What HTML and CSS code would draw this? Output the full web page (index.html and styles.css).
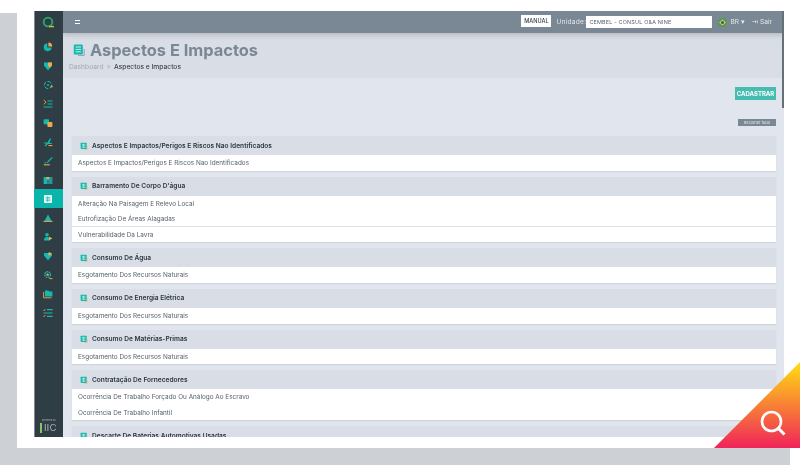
FILE: index.html
```html
<!DOCTYPE html>
<html lang="pt-BR">
<head>
<meta charset="utf-8">
<title>Aspectos E Impactos</title>
<link rel="stylesheet" href="styles.css">
</head>
<body>
<svg class="sprite" width="0" height="0" aria-hidden="true">
  <symbol id="tbl" viewBox="0 0 12 12">
    <rect x="1" y="1" width="9" height="9.5" rx="1" fill="#14b8ad"/>
    <path d="M3 3.6h5M3 5.8h5M3 8h5M5.5 2.5v6.5" stroke="#e4f6f4" stroke-width=".8" fill="none"/>
    <path d="M10.6 6v5H7" stroke="#eea94f" stroke-width="1" fill="none"/>
  </symbol>
</svg>
<div class="backdrop">
  <div class="panel">
    <div class="frame">
      <aside class="sidebar">
        <div class="logo">
          <svg width="14" height="13" viewBox="0 0 14 13"><circle cx="7" cy="6" r="4.3" fill="none" stroke="#29a96b" stroke-width="1.8"/><path d="M8 10.6h5" stroke="#cbb84a" stroke-width="1.4"/></svg>
        </div>
        <nav class="menu">
          <a class="item"><svg class="ic" viewBox="0 0 10 10"><path d="M4.3 1.2a4 4 0 1 0 4.4 4.4H4.3z" fill="#14b8ad"/><path d="M5.4 .5v3.9h3.9A4 4 0 0 0 5.4 .5z" fill="#eea94f"/></svg></a>
          <a class="item"><svg class="ic" viewBox="0 0 10 10"><path d="M1 1.5h8v3L5 9.5 1 4.5z" fill="#14b8ad"/><path d="M5 1.5h4v3L7 6.8 5 5z" fill="#eea94f"/></svg></a>
          <a class="item"><svg class="ic" viewBox="0 0 10 10"><circle cx="5" cy="5" r="3.6" fill="none" stroke="#14b8ad" stroke-width="1" stroke-dasharray="4 1.4"/><circle cx="5" cy="5" r="1" fill="#14b8ad"/><circle cx="8.6" cy="6.6" r="1" fill="#eea94f"/></svg></a>
          <a class="item"><svg class="ic" viewBox="0 0 10 10"><path d="M4.5 2h5M4.5 5h5M.5 8h9" stroke="#14b8ad" stroke-width="1" fill="none"/><path d="M.7 1l2.4 2.2L.7 5.4" stroke="#eea94f" stroke-width=".9" fill="none"/></svg></a>
          <a class="item"><svg class="ic" viewBox="0 0 10 10"><rect x=".6" y="1.2" width="5.4" height="5" rx=".8" fill="#14b8ad"/><rect x="4.4" y="4" width="5" height="5" rx=".8" fill="#eea94f"/></svg></a>
          <a class="item"><svg class="ic" viewBox="0 0 10 10"><path d="M1 5.4h3.5L7 1.2l1 .6L6.4 6H9v1H5L2.4 9.4 1.6 8.8 3.5 6.4H1z" fill="#14b8ad"/><path d="M5.4 8.6h4" stroke="#eea94f" stroke-width="1"/></svg></a>
          <a class="item"><svg class="ic" viewBox="0 0 10 10"><path d="M8.8 1L4.4 5.6l-.9 1.6 1.7-.8L9.6 1.8z" fill="#14b8ad"/><path d="M2 5.6l1.4 1.6H1.4z" fill="#14b8ad"/><path d="M.8 8.8h6" stroke="#eea94f" stroke-width="1.1"/></svg></a>
          <a class="item"><svg class="ic" viewBox="0 0 10 10"><path d="M.6 2h4v7h-4z" fill="#14b8ad"/><path d="M5.2 2h4.2v7H5.2z" fill="#1c9aa0"/><path d="M3.6 2h2.6v2.4H3.6z" fill="#eea94f"/></svg></a>
          <a class="item item-active"><svg class="ic" viewBox="0 0 10 10"><rect x="1" y="1" width="8" height="8" rx="1" fill="#eef9f8"/><path d="M2.6 3.4h4.8M2.6 5h4.8M2.6 6.7h4.8M4.6 2.4v5.4" stroke="#14b8ad" stroke-width=".7"/></svg></a>
          <a class="item"><svg class="ic" viewBox="0 0 10 10"><path d="M5 1.4L8.6 8H1.4z" fill="#14b8ad"/><path d="M.5 8.4h9" stroke="#eea94f" stroke-width="1"/></svg></a>
          <a class="item"><svg class="ic" viewBox="0 0 10 10"><circle cx="4" cy="2.8" r="1.8" fill="#14b8ad"/><path d="M1 8.6c0-3 1.4-3.6 3-3.6s3 .6 3 3.6z" fill="#14b8ad"/><path d="M6 4.6l3.4 1.8L6 8.2z" fill="#eea94f"/></svg></a>
          <a class="item"><svg class="ic" viewBox="0 0 10 10"><path d="M1 2h8v2.6L5 9.4 1 4.6z" fill="#14b8ad"/><circle cx="6.6" cy="2.8" r="1.6" fill="#eea94f"/></svg></a>
          <a class="item"><svg class="ic" viewBox="0 0 10 10"><circle cx="4.6" cy="4.6" r="2.8" fill="none" stroke="#14b8ad" stroke-width="1.4" stroke-dasharray="1.6 .7"/><circle cx="4.6" cy="4.6" r="1.2" fill="#eea94f"/><path d="M6.4 8.6h3" stroke="#eea94f" stroke-width="1"/></svg></a>
          <a class="item"><svg class="ic" viewBox="0 0 10 10"><path d="M2 1.4h3.4l1 1h3v5.2H2z" fill="#14b8ad"/><path d="M.6 3v5.8h8" stroke="#eea94f" stroke-width=".9" fill="none"/></svg></a>
          <a class="item"><svg class="ic" viewBox="0 0 10 10"><path d="M4 1.6h5.6M.5 5h9M4 8.4h5.6" stroke="#14b8ad" stroke-width="1.1"/><path d="M.6 3l1.8-1.8M.6 8.8l1.8-1.8" stroke="#eea94f" stroke-width="1"/></svg></a>
        </nav>
        <div class="brand">
          <span class="brand-by">powered by</span>
          <span class="brand-name">IIC</span>
        </div>
      </aside>
      <div class="main">
        <header class="topbar">
          <span class="burger"></span>
          <div class="top-right">
            <button class="manual">MANUAL</button>
            <span class="unit-label">Unidade:</span>
            <span class="unit-input">CEMBEL - CONSUL O&amp;A NINE</span>
            <svg class="flag" viewBox="0 0 10 10"><circle cx="5" cy="5" r="5" fill="#4f9d55"/><path d="M5 1.8L8.8 5 5 8.2 1.2 5z" fill="#e2c94a"/><circle cx="5" cy="5" r="1.7" fill="#35588f"/></svg>
            <span class="lang">BR ▾</span>
            <span class="exit">⇥ Sair</span>
          </div>
        </header>
        <section class="page-head">
          <h1 class="title"><svg class="title-ic" viewBox="0 0 12 12"><rect x=".8" y=".5" width="9" height="10" rx="1.2" fill="#14b8ad"/><path d="M2.6 3h5.4M2.6 5.4h5.4M2.6 7.8h5.4" stroke="#dff5f3" stroke-width=".9"/><path d="M11.2 5v6.4H5" stroke="#8f9aa6" stroke-width=".9" fill="none"/></svg>Aspectos E Impactos</h1>
          <div class="crumbs"><span class="crumb-light">Dashboard</span><span class="crumb-sep">&gt;</span><span class="crumb-cur">Aspectos e Impactos</span></div>
        </section>
        <section class="content">
          <div class="actions"><button class="btn-add">CADASTRAR</button></div>
          <div class="actions-small"><button class="btn-small">Recolher tudo</button></div>
          <div class="list">
            <article class="card">
              <h2 class="card-head"><svg class="card-ic"><use href="#tbl"/></svg>Aspectos E Impactos/Perigos E Riscos Nao Identificados</h2>
              <div class="row">Aspectos E Impactos/Perigos E Riscos Nao Identificados</div>
            </article>
            <article class="card">
              <h2 class="card-head"><svg class="card-ic"><use href="#tbl"/></svg>Barramento De Corpo D'água</h2>
              <div class="row">Alteração Na Paisagem E Relevo Local</div>
              <div class="row row-line">Eutrofização De Áreas Alagadas</div>
              <div class="row">Vulnerabilidade Da Lavra</div>
            </article>
            <article class="card">
              <h2 class="card-head"><svg class="card-ic"><use href="#tbl"/></svg>Consumo De Água</h2>
              <div class="row">Esgotamento Dos Recursos Naturais</div>
            </article>
            <article class="card">
              <h2 class="card-head"><svg class="card-ic"><use href="#tbl"/></svg>Consumo De Energia Elétrica</h2>
              <div class="row">Esgotamento Dos Recursos Naturais</div>
            </article>
            <article class="card">
              <h2 class="card-head"><svg class="card-ic"><use href="#tbl"/></svg>Consumo De Matérias-Primas</h2>
              <div class="row">Esgotamento Dos Recursos Naturais</div>
            </article>
            <article class="card">
              <h2 class="card-head"><svg class="card-ic"><use href="#tbl"/></svg>Contratação De Fornecedores</h2>
              <div class="row">Ocorrência De Trabalho Forçado Ou Análogo Ao Escravo</div>
              <div class="row">Ocorrência De Trabalho Infantil</div>
            </article>
            <article class="card">
              <h2 class="card-head"><svg class="card-ic"><use href="#tbl"/></svg>Descarte De Baterias Automotivas Usadas</h2>
            </article>
          </div>
        </section>
        <div class="scroll-thumb"></div>
      </div>
    </div>
  </div>
</div>
<div class="corner">
  <svg class="corner-ic" viewBox="0 0 28 28"><circle cx="12.5" cy="12.5" r="9.5" fill="none" stroke="#fff" stroke-width="2.6"/><path d="M19.5 19.5l6 6" stroke="#fff" stroke-width="3"/></svg>
</div>
</body>
</html>
```

FILE: styles.css
```css
* { box-sizing: border-box; }
html, body { margin: 0; height: 465px; overflow: hidden; background: #fff; }
body { font-family: Inter, "Liberation Sans", sans-serif; position: relative; }
.sprite { position: absolute; }
.backdrop { width: 790px; height: 452px; margin-top: 13px; padding: 0 0 17px 17px; background: #cdd0d4; display: flow-root; }
.panel { width: 783px; height: 435px; padding-left: 17px; background: #fff; display: flow-root; }
.frame { width: 750px; height: 426px; margin-top: -2px; display: flex; overflow: hidden; filter: blur(.45px); }

.sidebar { width: 29px; flex: none; background: #2f3e44; border-left: 1px solid #7d878c; display: flex; flex-direction: column; }
.logo { height: 22px; flex: none; display: flex; align-items: center; justify-content: center; padding-right: 3px; }
.menu { padding-top: 4px; display: flex; flex-direction: column; flex: 1; }
.item { height: 19px; display: flex; align-items: center; justify-content: center; flex: none; padding-right: 3px; }
.item-active { background: #0cb5ab; margin-left: -1px; padding-right: 2px; }
.ic { width: 10px; height: 10px; display: block; }
.brand { height: 19px; padding-left: 5px; color: #d8dde0; display: flex; flex-direction: column; flex: none; }
.brand-by { font-size: 2.5px; line-height: 5px; padding-left: 2px; color: #aab2b6; }
.brand-name { font-size: 9px; line-height: 10px; font-weight: 300; border-left: 2px solid #8dc26a; padding-left: 2px; letter-spacing: .5px; width: fit-content; }

.main { flex: 1; min-width: 0; display: flex; flex-direction: column; position: relative; background: #e1e5ed; }
.topbar { height: 22px; flex: none; background: #7a8794; padding: 0 0 0 12px; display: flex; align-items: center; justify-content: space-between; box-shadow: 0 2px 5px rgba(70,80,95,.25); position: relative; z-index: 1; }
.burger { width: 5px; height: 4px; border-top: 1px solid #fff; border-bottom: 1px solid #fff; position: relative; }
.top-right { display: flex; align-items: center; padding-right: 12px; color: #e6e9ec; font-size: 6.6px; }
.manual { width: 30px; height: 12px; margin: -2px 5px 0 0; padding: 0; border: 0; background: #fff; color: #3a444c; font: 500 5.6px Inter, sans-serif; }
.unit-label { width: 30px; letter-spacing: .25px; }
.unit-input { width: 126px; height: 12px; margin-right: 6px; padding-left: 3px; background: #fff; color: #59626b; font-size: 5.4px; line-height: 12px; letter-spacing: .2px; }
.flag { width: 9px; height: 9px; margin-right: 3px; }
.lang { margin-right: 5px; width: 16px; }
.exit { white-space: nowrap; }

.page-head { height: 45px; flex: none; background: #d9dde5; padding: 8px 0 0 6px; }
.title { margin: 0; padding-left: 4px; display: flex; align-items: center; gap: 5px; height: 17px; font-size: 16.4px; font-weight: 700; color: #7a8794; white-space: nowrap; }
.title-ic { width: 12px; height: 12px; flex: none; }
.crumbs { margin-top: 4.5px; font-size: 6.7px; line-height: 9px; display: flex; gap: 3px; }
.crumb-light { color: #a3a8af; }
.crumb-sep { color: #a3a8af; }
.crumb-cur { color: #3a4650; font-weight: 500; }

.content { flex: 1; padding: 9px 8px 0 9px; min-height: 0; overflow: hidden; }
.actions { display: flex; justify-content: flex-end; }
.btn-add { width: 41px; height: 13px; padding: 0; border: 0; background: #45bdb1; color: #fff; font: 700 6px Inter, sans-serif; }
.actions-small { display: flex; justify-content: flex-end; margin-top: 19px; }
.btn-small { width: 38px; height: 7px; padding: 0; border: 0; background: #7a8794; color: #e4e7ea; font: 400 4px/7px Inter, sans-serif; }
.list { margin-top: 10px; display: flex; flex-direction: column; gap: 6px; }
.card { box-shadow: 0 1px 1px rgba(90,100,115,.12); }
.card-head { margin: 0; height: 19px; padding-left: 8px; display: flex; align-items: center; gap: 4px; background: #d9dde5; border-radius: 1px 1px 0 0; color: #2b373f; font-size: 6.6px; font-weight: 600; white-space: nowrap; }
.card-ic { width: 8px; height: 8px; flex: none; }
.row { height: 15.6px; padding: 1px 0 0 6px; background: #fff; color: #56616c; font-size: 6.4px; line-height: 15px; white-space: nowrap; }
.row-line { border-bottom: 1px solid #dfe2e8; }
.scroll-thumb { position: absolute; right: 0; top: 0; width: 2px; height: 97px; background: #667079; z-index: 2; }

.corner { position: absolute; left: 714px; top: 362px; width: 86px; height: 86px; clip-path: polygon(100% 0, 100% 100%, 0 100%); background: linear-gradient(#ffdf10, #f0245a); }
.corner-ic { position: absolute; right: 13px; top: 47px; width: 28px; height: 28px; }
```
